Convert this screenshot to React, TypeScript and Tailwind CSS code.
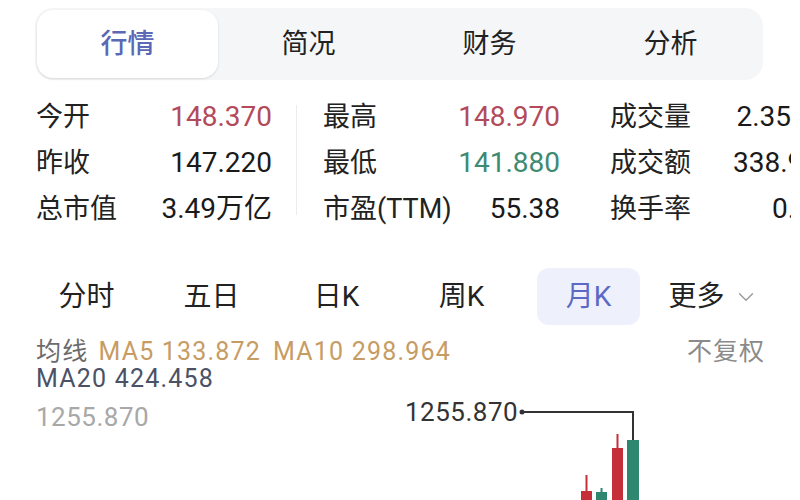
import React from 'react';
import { ChevronDown } from 'lucide-react';

const topTabs = ['行情', '简况', '财务', '分析'];
const periods = ['分时', '五日', '日K', '周K', '月K', '更多'];

type Stat = { label: string; value: string; color?: string };

const col1: Stat[] = [
  { label: '今开', value: '148.370', color: 'text-[#b24a5b]' },
  { label: '昨收', value: '147.220' },
  { label: '总市值', value: '3.49万亿' },
];
const col2: Stat[] = [
  { label: '最高', value: '148.970', color: 'text-[#b24a5b]' },
  { label: '最低', value: '141.880', color: 'text-[#3d8a73]' },
  { label: '市盈(TTM)', value: '55.38' },
];
const col3: Stat[] = [
  { label: '成交量', value: '2.35万手' },
  { label: '成交额', value: '338.91亿' },
  { label: '换手率', value: '0.07%' },
];

function StatColumn({ items, width }: { items: Stat[]; width: string }) {
  return (
    <div className={`flex flex-col shrink-0 ${width}`}>
      {items.map((s) => (
        <div key={s.label} className="h-[46px] flex items-center justify-between whitespace-nowrap">
          <span className="text-[27px] text-[#222]">{s.label}</span>
          <span className={`text-[28px] ${s.color ?? 'text-[#1a1a1a]'}`}>{s.value}</span>
        </div>
      ))}
    </div>
  );
}

export default function App() {
  return (
    <div
      className="w-[800px] h-[500px] bg-white overflow-hidden"
      style={{ fontFamily: '"Roboto", "Noto Sans CJK SC", sans-serif' }}
    >
      {/* top tabs */}
      <div className="pt-[8px] pl-[35px]">
        <div className="w-[728px] h-[72px] bg-[#f5f6f8] rounded-[18px] p-[2px] grid grid-cols-4">
          {topTabs.map((t, i) => (
            <div
              key={t}
              className={`flex items-center justify-center text-[27px] ${
                i === 0 ? 'bg-white rounded-[16px] shadow-sm text-[#5a68b5] font-medium' : 'text-[#222]'
              }`}
            >
              {t}
            </div>
          ))}
        </div>
      </div>

      {/* stats */}
      <div className="mt-[14px] flex pl-[36px]">
        <StatColumn items={col1} width="w-[236px]" />
        <div className="ml-[24px] mt-[11px] w-px h-[110px] bg-[#ececec]" />
        <div className="ml-[26px]">
          <StatColumn items={col2} width="w-[237px]" />
        </div>
        <div className="ml-[50px] w-[181px] overflow-hidden">
          <StatColumn items={col3} width="w-[237px]" />
        </div>
      </div>

      {/* periods */}
      <div className="mt-[36px] pl-[24px] grid grid-cols-[repeat(6,125px)] h-[57px]">
        {periods.map((p, i) => (
          <div key={p} className="flex items-center justify-center">
            {i === 4 ? (
              <div className="w-[103px] h-[57px] rounded-[12px] bg-[#eef0fc] text-[#5b69c4] text-[28px] flex items-center justify-center ml-[4px]">
                {p}
              </div>
            ) : i === 5 ? (
              <div className="flex items-center text-[28px] text-[#222] ml-[4px]">
                {p}
                <ChevronDown className="ml-[8px] w-[26px] h-[26px] text-[#9a9a9a]" strokeWidth={1.3} />
              </div>
            ) : (
              <span className="text-[28px] text-[#222]">{p}</span>
            )}
          </div>
        ))}
      </div>

      {/* MA lines */}
      <div className="mt-[13px] pl-[36px] pr-[35px] flex justify-between items-center h-[27px]">
        <div className="text-[25px] tracking-[1.2px] whitespace-nowrap">
          <span className="text-[#6b6b6b]">均线</span>
          <span className="text-[#c79c63] ml-[10px]">MA5 133.872</span>
          <span className="text-[#c79c63] ml-[12px]">MA10 298.964</span>
        </div>
        <span className="text-[25px] text-[#8a8a8a] tracking-[1px]">不复权</span>
      </div>
      <div className="pl-[36px] h-[27px] flex items-center text-[25px] tracking-[1.2px] text-[#4b5266]">MA20 424.458</div>

      {/* chart */}
      <div className="relative mt-[11px] h-[97px]">
        <div className="pl-[36px] h-[28px] flex items-center text-[26px] text-[#a8a8a8] tracking-[0.5px]">1255.870</div>
        <span className="absolute left-[405px] top-[-5px] leading-[28px] text-[26px] text-[#333] tracking-[0.5px]">
          1255.870
        </span>
        <svg className="absolute left-0 top-0" width="800" height="97" viewBox="0 0 800 97">
          <circle cx="522" cy="9" r="2.5" fill="#333" />
          <polyline points="522,9 633,9 633,37" fill="none" stroke="#333" strokeWidth="2" />
          <rect x="627" y="37" width="12" height="70" fill="#2f8770" />
          <line x1="617.5" y1="31" x2="617.5" y2="46" stroke="#c52f3a" strokeWidth="2" />
          <rect x="612" y="45" width="11" height="60" fill="#c52f3a" />
          <line x1="586.5" y1="72" x2="586.5" y2="89" stroke="#c52f3a" strokeWidth="2" />
          <rect x="581" y="88" width="11" height="20" fill="#c52f3a" />
          <line x1="601.5" y1="85" x2="601.5" y2="90" stroke="#2f8770" strokeWidth="2" />
          <rect x="596" y="89" width="11" height="20" fill="#2f8770" />
        </svg>
      </div>
    </div>
  );
}
